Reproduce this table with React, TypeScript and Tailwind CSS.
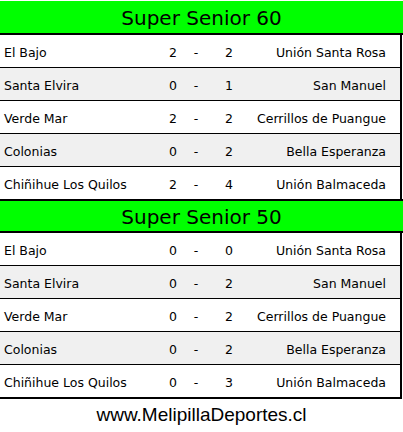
type Match = { home: string; hs: number; as: number; away: string };

const senior60: Match[] = [
  { home: "El Bajo", hs: 2, as: 2, away: "Unión Santa Rosa" },
  { home: "Santa Elvira", hs: 0, as: 1, away: "San Manuel" },
  { home: "Verde Mar", hs: 2, as: 2, away: "Cerrillos de Puangue" },
  { home: "Colonias", hs: 0, as: 2, away: "Bella Esperanza" },
  { home: "Chiñihue Los Quilos", hs: 2, as: 4, away: "Unión Balmaceda" },
];

const senior50: Match[] = [
  { home: "El Bajo", hs: 0, as: 0, away: "Unión Santa Rosa" },
  { home: "Santa Elvira", hs: 0, as: 2, away: "San Manuel" },
  { home: "Verde Mar", hs: 0, as: 2, away: "Cerrillos de Puangue" },
  { home: "Colonias", hs: 0, as: 2, away: "Bella Esperanza" },
  { home: "Chiñihue Los Quilos", hs: 0, as: 3, away: "Unión Balmaceda" },
];

function Section({ title, matches, first }: { title: string; matches: Match[]; first?: boolean }) {
  return (
    <div>
      <div
        className={`flex items-center justify-center border-b-2 border-b-black bg-[#00ff00] pt-[2px] text-[20px] text-black ${
          first ? "h-[35px] border-t border-t-white" : "h-[34px] border-t-2 border-t-black"
        }`}
      >
        {title}
      </div>
      <div className="w-[402px] border-r-2 border-black">
        {matches.map((m, i) => (
          <div
            key={m.home}
            className={`flex items-center pt-[5px] text-[12.5px] text-black ${i % 2 === 1 ? "bg-[#f0f0f0]" : "bg-white"} ${
              i < matches.length - 1 ? "h-[33px] border-b border-black" : "h-[32px]"
            }`}
          >
            <span className="w-[163px] pl-[4px]">{m.home}</span>
            <span className="w-[20px] text-center">{m.hs}</span>
            <span className="w-[26px] text-center">-</span>
            <span className="w-[40px] text-center">{m.as}</span>
            <span className="flex-1 pr-[14px] text-right">{m.away}</span>
          </div>
        ))}
      </div>
    </div>
  );
}

export default function App() {
  return (
    <div className="h-[432px] w-[403px] bg-white font-['DejaVu_Sans',Verdana,sans-serif]">
      <Section title="Super Senior 60" matches={senior60} first />
      <Section title="Super Senior 50" matches={senior50} />
      <div className="w-[402px] border-t-2 border-black" />
      <div className="flex h-[33px] items-center justify-center font-['Liberation_Sans',Arial,sans-serif] text-[19px] text-black">
        www.MelipillaDeportes.cl
      </div>
    </div>
  );
}
